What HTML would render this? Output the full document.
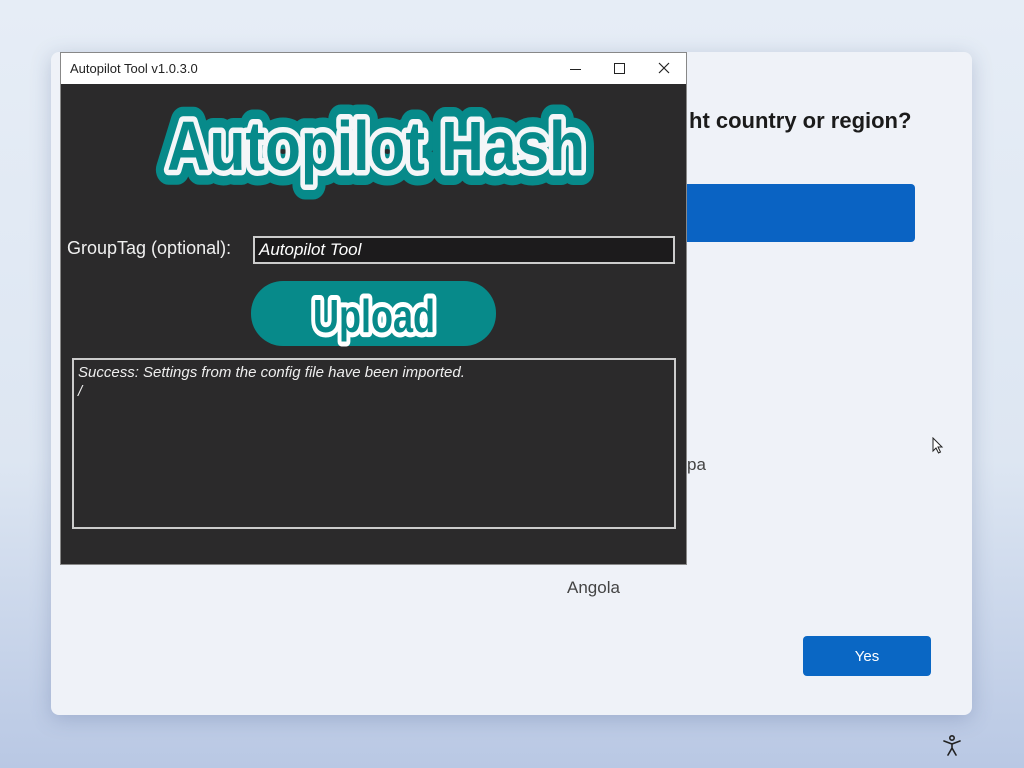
<!DOCTYPE html>
<html><head><style>
body{margin:0;width:1024px;height:768px;overflow:hidden;position:relative;font-family:"Liberation Sans",sans-serif;
background:linear-gradient(180deg,#e6edf6 0%,#dde6f2 60%,#b9c8e4 100%);}
.card{position:absolute;left:51px;top:52px;width:921px;height:663px;background:#eff2f8;border-radius:8px;box-shadow:0 4px 20px rgba(60,80,130,.25);}
.abs{position:absolute}
.win{position:absolute;left:60px;top:52px;width:627px;height:513px;background:#2b2a2b;border:1px solid #888;box-sizing:border-box;}
.tb{position:absolute;left:0;top:0;width:100%;height:31px;background:#fff;font-size:12px;color:#222;}
</style></head><body>
<div class="card"></div>
<div class="abs" style="left:689px;top:108px;font-size:22px;font-weight:bold;color:#1b1b1b">ht country or region?</div>
<div class="abs" style="left:687px;top:184px;width:228px;height:58px;background:#0a63c3;border-radius:0 4px 4px 0"></div>
<div class="abs" style="left:687px;top:455px;font-size:17px;color:#444">pa</div>
<div class="abs" style="left:567px;top:578px;font-size:17px;color:#444">Angola</div>
<div class="abs" style="left:803px;top:636px;width:128px;height:40px;background:#0a67c4;border-radius:4px;color:#fff;font-size:15px;text-align:center;line-height:42px">Yes</div>
<svg class="abs" style="left:932px;top:437px" width="12" height="18" viewBox="0 0 12 18"><path d="M1 1v13l3-3 2.5 5 2-1-2.5-5h4z" fill="#fff" stroke="#222" stroke-width="1"/></svg>
<svg class="abs" style="left:942px;top:734px" width="20" height="22" viewBox="0 0 20 22"><g fill="none" stroke="#222" stroke-width="1.6" stroke-linecap="round"><circle cx="10" cy="4" r="2.2"/><path d="M2 7l8 3 8-3M10 10v4l-4 7M10 14l4 7"/></g></svg>

<div class="win">
<div class="tb"><span class="abs" style="left:9px;top:8px;font-size:13px">Autopilot Tool v1.0.3.0</span>
<div class="abs" style="left:509px;top:16px;width:11px;height:1px;background:#222"></div>
<div class="abs" style="left:553px;top:10px;width:9px;height:9px;border:1px solid #222"></div>
<svg class="abs" style="left:597px;top:9px" width="12" height="12"><path d="M1 1L11 11M11 1L1 11" stroke="#222" stroke-width="1.2"/></svg>
</div>
<svg class="abs" style="left:0;top:31px" width="627" height="482">
<g font-family="Liberation Sans,sans-serif" font-weight="bold" font-size="70">
<text x="106" y="86" textLength="418" lengthAdjust="spacingAndGlyphs" stroke="#078a8a" stroke-width="30" stroke-linejoin="round" fill="#078a8a">Autopilot Hash</text>
<text x="106" y="86" textLength="418" lengthAdjust="spacingAndGlyphs" stroke="#f4f6f8" stroke-width="11" stroke-linejoin="round" fill="#fff">Autopilot Hash</text>
<text x="106" y="86" textLength="418" lengthAdjust="spacingAndGlyphs" fill="#078a8a">Autopilot Hash</text>
</g>
<rect x="190" y="197" width="245" height="65" rx="32" fill="#078a8a"/>
<g font-family="Liberation Sans,sans-serif" font-weight="bold" font-size="46">
<text x="252" y="248" textLength="122" lengthAdjust="spacingAndGlyphs" stroke="#fff" stroke-width="10" stroke-linejoin="round" fill="#fff">Upload</text>
<text x="252" y="248" textLength="122" lengthAdjust="spacingAndGlyphs" fill="#078a8a">Upload</text>
</g>
</svg>
<div class="abs" style="left:6px;top:185px;font-size:18px;color:#f0f0f0">GroupTag (optional):</div>
<div class="abs" style="left:192px;top:183px;width:422px;height:28px;background:#1c1b1c;border:2px solid #ccc;box-sizing:border-box;font-style:italic;font-size:17px;color:#fff;padding:2px 4px">Autopilot Tool</div>
<div class="abs" style="left:11px;top:305px;width:604px;height:171px;border:2px solid #ccc;box-sizing:border-box;font-style:italic;font-size:15px;color:#eee;padding:3px 4px;line-height:19px">Success: Settings from the config file have been imported.<br>/</div>
</div>
</body></html>
